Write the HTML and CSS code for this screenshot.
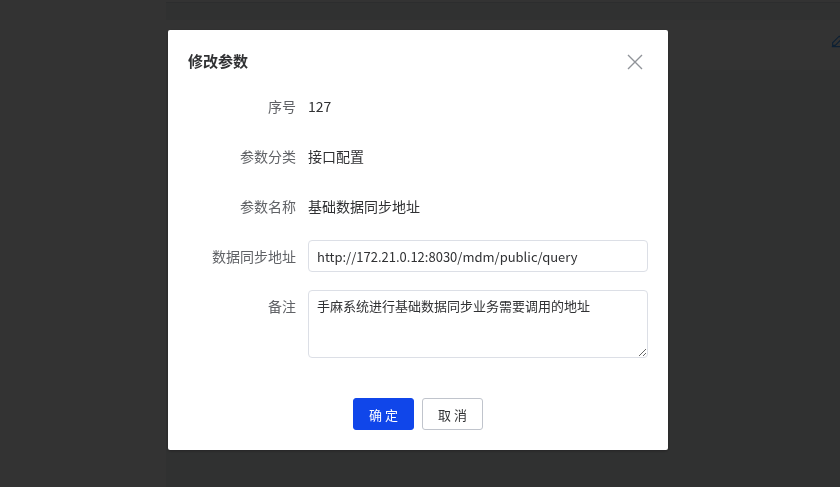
FILE: index.html
```html
<!DOCTYPE html>
<html>
<head>
<meta charset="utf-8"/>
<title>修改参数</title>
<link rel="stylesheet" href="styles.css">
</head>
<body>

<div class="page">
  <div class="sidebar"></div>
  <div class="main">
    <div class="top-card"></div>
    <div class="table-row">
      <svg class="edit-icon" viewBox="0 0 16 16" width="14" height="14">
        <path d="M10.5 2.5l3 3L6 13H3v-3z M2 14.5h12" fill="none" stroke="currentColor" stroke-width="1.3"/>
      </svg>
    </div>
  </div>
</div>

<div class="mask">
  <div class="dialog">
    <div class="dialog-header">
      <span class="dialog-title">修改参数</span>
      <svg class="dialog-close" viewBox="0 0 16 16" width="16" height="16">
        <path d="M1 1L15 15M15 1L1 15" stroke="currentColor" stroke-width="1.4"/>
      </svg>
    </div>

    <form class="dialog-body">
      <div class="form-item">
        <label class="form-label">序号</label>
        <div class="form-value">127</div>
      </div>
      <div class="form-item">
        <label class="form-label">参数分类</label>
        <div class="form-value">接口配置</div>
      </div>
      <div class="form-item">
        <label class="form-label">参数名称</label>
        <div class="form-value">基础数据同步地址</div>
      </div>
      <div class="form-item">
        <label class="form-label">数据同步地址</label>
        <div class="form-value">
          <input class="input" type="text" value="http://172.21.0.12:8030/mdm/public/query">
        </div>
      </div>
      <div class="form-item">
        <label class="form-label">备注</label>
        <div class="form-value">
          <textarea class="textarea">手麻系统进行基础数据同步业务需要调用的地址</textarea>
        </div>
      </div>
    </form>

    <div class="dialog-footer">
      <button class="btn btn-primary" type="button">确 定</button>
      <button class="btn" type="button">取 消</button>
    </div>
  </div>
</div>

</body>
</html>
```

FILE: styles.css
```css
html, body {
  margin: 0;
  height: 100%;
}

body {
  font-family: "Noto Sans CJK SC", sans-serif;
  font-size: 14px;
  color: #303133;
  background-color: #fff;
}

/* page underneath the mask */
.page {
  display: flex;
  height: 100%;
}

.sidebar {
  width: 166px;
  background-color: #fff;
}

.main {
  flex: 1;
  background-color: #f0f2f5;
}

.top-card {
  height: 2px;
  background-color: #fff;
  border-bottom: 1px solid #dcdfe6;
}

.table-row {
  margin-top: 17px;
  height: 50px;
  background-color: #fff;
  display: flex;
  align-items: center;
  justify-content: flex-end;
}

.edit-icon {
  color: #409eff;
  margin-right: -4px;
  margin-top: -8px;
}

/* dialog */
.mask {
  position: fixed;
  top: 0;
  left: 0;
  right: 0;
  bottom: 0;
  background-color: rgba(0, 0, 0, 0.8);
  display: flex;
  justify-content: center;
  align-items: flex-start;
  padding: 30px 4px 0 0;
}

.dialog {
  width: 500px;
  background-color: #fff;
  border-radius: 2px;
  box-shadow: 0 1px 3px rgba(0, 0, 0, 0.3);
}

.dialog-header {
  display: flex;
  justify-content: space-between;
  align-items: center;
  padding: 18px 25px 0 20px;
  height: 24px;
}

.dialog-title {
  font-size: 15px;
  font-weight: bold;
  color: #303133;
}

.dialog-close {
  color: #909399;
  margin-top: 4px;
}

.dialog-body {
  margin: 0;
  padding: 18px 20px 0 20px;
}

.form-item {
  display: flex;
  margin-bottom: 18px;
}

.form-label {
  width: 120px;
  padding-right: 12px;
  box-sizing: border-box;
  text-align: right;
  line-height: 32px;
  color: #606266;
}

.form-value {
  flex: 1;
  line-height: 32px;
  color: #303133;
}

.input, .textarea {
  display: block;
  width: 100%;
  box-sizing: border-box;
  border: 1px solid #dcdfe6;
  border-radius: 4px;
  font-family: inherit;
  font-size: 13px;
  color: #303133;
  padding: 0 8px;
  margin: 0;
  outline: none;
}

.input {
  height: 32px;
  line-height: 30px;
}

.textarea {
  height: 68px;
  line-height: 20px;
  padding-top: 5px;
}

.dialog-footer {
  display: flex;
  justify-content: center;
  gap: 8px;
  padding: 22px 0 20px;
}

.btn {
  height: 32px;
  padding: 0 15px;
  font-family: inherit;
  font-size: 13px;
  color: #303133;
  background-color: #fff;
  border: 1px solid #c0c4cc;
  border-radius: 3px;
}

.btn-primary {
  color: #fff;
  background-color: #1046ea;
  border-color: #1046ea;
}
```
